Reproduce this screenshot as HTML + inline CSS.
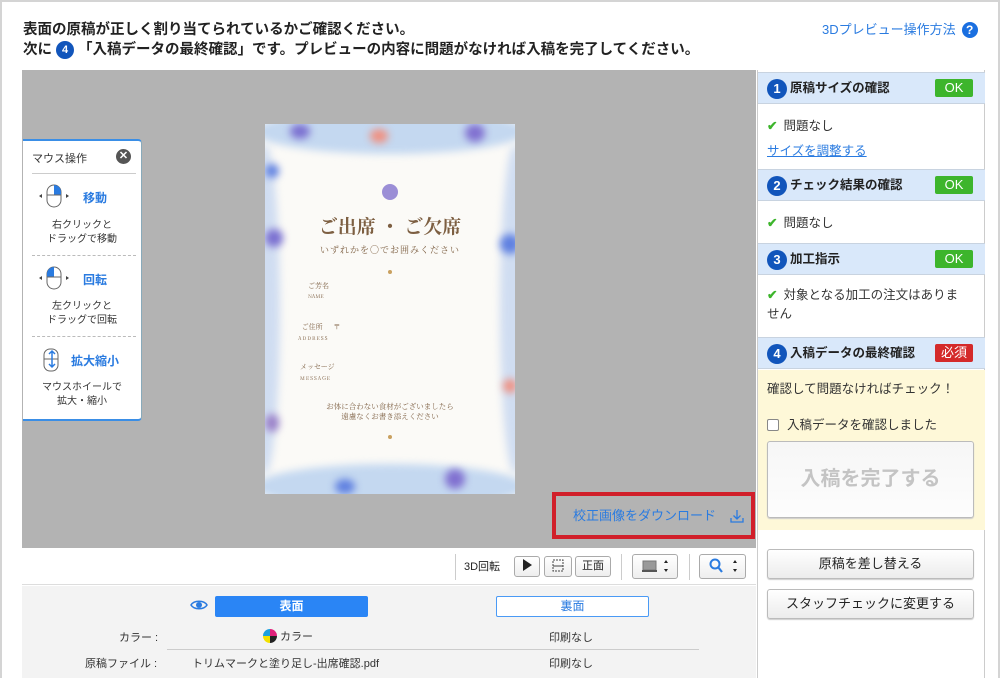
<!DOCTYPE html>
<html><head><meta charset="utf-8"><style>
*{box-sizing:border-box;margin:0;padding:0}
body{width:1002px;height:678px;overflow:hidden;background:#fff;font-family:"Liberation Sans","Noto Sans CJK JP",sans-serif;color:#222;position:relative}
.abs{position:absolute}
.frame{left:0;top:0;width:1000px;height:678px;border:2px solid #d4d4d4;border-bottom:none}
.title{left:23px;top:20px;font-size:14.5px;font-weight:bold;line-height:20px;color:#222}
.num{display:inline-block;width:18px;height:18px;border-radius:50%;background:#1155bb;color:#fff;font-size:11px;text-align:center;line-height:18px;font-weight:bold;vertical-align:1px}
.help{left:822px;top:19px;font-size:13px;color:#2a7be0}
.help span{display:inline-block;width:16px;height:16px;border-radius:50%;background:#1a6fe0;color:#fff;font-size:12px;text-align:center;line-height:16px;font-weight:bold;margin-left:6px}
.viewer{left:22px;top:70px;width:734px;height:478px;background:#b3b3b3}
.card{left:265px;top:124px;width:250px;height:370px;background:#fbfaf7;overflow:hidden}
.blob{position:absolute;border-radius:50%;filter:blur(4px)}
.gold{color:#7d5f42;font-family:"Noto Serif CJK SC","Liberation Serif",serif}
.mouse{left:23px;top:139px;width:119px;height:282px;background:#fff;border:1px solid #8ab;border-top:2px solid #3a8ee6;border-bottom:2px solid #3a8ee6;border-left:none;border-radius:0 4px 4px 0;font-size:10px;color:#333;text-align:center}
.mouse .blue{color:#2a7be0;font-weight:bold;font-size:12px}
.dl{left:552px;top:492px;width:203px;height:47px;border:4px solid #d11f2a;color:#2a7be0;font-size:13px;line-height:39px;padding-left:17px}
.tb{left:22px;top:548px;width:734px;height:37px;background:#fff;border-bottom:1px solid #ddd}
.btn{position:absolute;height:21px;border:1px solid #aaa;border-radius:3px;background:linear-gradient(#fff,#eee);font-size:11px;text-align:center;line-height:19px}
.info{left:22px;top:586px;width:734px;height:92px;background:#f3f3f3;font-size:11px;color:#333}
.rp{left:757px;top:70px;width:228px;height:608px;border-left:1px solid #ccc;border-right:1px solid #ccc;background:#fff}
.hd{position:absolute;left:0;width:227px;height:32px;background:#d9e8fa;border-top:1px solid #c8d3e0;border-bottom:1px solid #c8d3e0;font-size:12.5px;font-weight:bold;line-height:30px;padding-left:9px}
.hd .num{width:20px;height:20px;line-height:20px;font-size:13px;margin-right:3px;vertical-align:-1px}
.ok{position:absolute;right:12px;top:6px;width:38px;height:18px;background:#3db52c;color:#fff;border-radius:2px;text-align:center;line-height:18px;font-size:13px;font-weight:normal}
.tx{position:absolute;left:9px;font-size:12.5px;color:#333}
.ck{color:#3db52c;font-weight:bold;margin-right:6px}
.rb{position:absolute;left:9px;width:207px;height:30px;border:1px solid #bbb;border-radius:3px;background:linear-gradient(#fff,#ececec);font-size:13px;text-align:center;line-height:28px;box-shadow:0 1px 1px #ccc}
</style></head><body>
<div class="abs frame"></div>
<div class="abs title">表面の原稿が正しく割り当てられているかご確認ください。<br>次に <span class="num">4</span> 「入稿データの最終確認」です。プレビューの内容に問題がなければ入稿を完了してください。</div>
<div class="abs help">3Dプレビュー操作方法<span>?</span></div>

<div class="abs viewer"></div>
<div class="abs card">
 <div class="blob" style="left:-10px;top:-15px;width:270px;height:45px;background:#c4d8f0"></div>
 <div class="blob" style="left:-15px;top:20px;width:30px;height:330px;background:#d0ddf1"></div>
 <div class="blob" style="left:235px;top:20px;width:30px;height:330px;background:#d0ddf1"></div>
 <div class="blob" style="left:-10px;top:340px;width:270px;height:45px;background:#c4d8f0"></div>
 <div class="blob" style="left:25px;top:0;width:20px;height:15px;background:#7a6fd0"></div>
 <div class="blob" style="left:105px;top:5px;width:18px;height:14px;background:#f09080"></div>
 <div class="blob" style="left:200px;top:0;width:20px;height:18px;background:#8070d0"></div>
 <div class="blob" style="left:0;top:105px;width:18px;height:18px;background:#7a6fd0"></div>
 <div class="blob" style="left:235px;top:110px;width:20px;height:20px;background:#5f80e0"></div>
 <div class="blob" style="left:70px;top:355px;width:20px;height:15px;background:#5f80e0"></div>
 <div class="blob" style="left:180px;top:345px;width:20px;height:20px;background:#8070d0"></div>
 <div class="blob" style="left:0;top:40px;width:14px;height:14px;background:#5f80e0"></div>
 <div class="blob" style="left:238px;top:255px;width:14px;height:14px;background:#f09080"></div>
 <div class="blob" style="left:0;top:290px;width:14px;height:18px;background:#9a80c8"></div>
 <div style="position:absolute;left:117px;top:60px;width:16px;height:16px;border-radius:50%;background:#9b8ed6"></div>
 <div class="abs gold" style="left:0;width:250px;top:88px;text-align:center;font-size:19px;font-weight:bold">ご出席 ・ ご欠席</div>
 <div class="abs gold" style="left:0;width:250px;top:119px;text-align:center;font-size:9px;letter-spacing:1px">いずれかを〇でお囲みください</div>
 <div class="abs" style="left:123px;top:146px;width:4px;height:4px;border-radius:50%;background:#c9a060"></div>
 <div class="abs gold" style="left:43px;top:157px;font-size:7px;line-height:10px">ご芳名<br><span style="font-size:5px">NAME</span></div>
 <div class="abs gold" style="left:33px;top:198px;font-size:7px;line-height:11px">&nbsp;&nbsp;ご住所 &nbsp;&nbsp;&nbsp;&nbsp;&nbsp;〒<br><span style="font-size:5px;letter-spacing:1px">ADDRESS</span></div>
 <div class="abs gold" style="left:35px;top:238px;font-size:7px;line-height:11px">メッセージ<br><span style="font-size:5px;letter-spacing:1px">MESSAGE</span></div>
 <div class="abs gold" style="left:0;width:250px;top:278px;text-align:center;font-size:7.5px;line-height:10px">お体に合わない食材がございましたら<br>遠慮なくお書き添えください</div>
 <div class="abs" style="left:123px;top:311px;width:4px;height:4px;border-radius:50%;background:#c9a060"></div>
</div>

<div class="abs mouse">
 <div style="text-align:left;padding:9px 0 0 9px;font-size:11px">マウス操作</div>
 <div class="abs" style="right:10px;top:8px;width:15px;height:15px;border-radius:50%;background:#555;color:#fff;font-size:11px;line-height:15px;font-weight:bold">✕</div>
 <div class="abs" style="left:9px;right:5px;top:32px;border-top:1px solid #ccc"></div>
 <svg class="abs" style="left:15px;top:42px" width="32" height="26"><rect x="9" y="2" width="14" height="22" rx="7" fill="#fff" stroke="#666"/><path d="M16 2a7 7 0 0 1 7 7v3h-7z" fill="#2a7be0"/><line x1="9" y1="12" x2="23" y2="12" stroke="#666"/><path d="M1 13l3-2v4zM31 13l-3-2v4z" fill="#444"/></svg>
 <div class="abs blue" style="left:60px;top:48px">移動</div>
 <div class="abs" style="left:0;width:118px;top:78px;line-height:14px">右クリックと<br>ドラッグで移動</div>
 <div class="abs" style="left:9px;right:5px;top:114px;border-top:1px dashed #bbb"></div>
 <svg class="abs" style="left:15px;top:124px" width="32" height="26"><rect x="9" y="2" width="14" height="22" rx="7" fill="#fff" stroke="#666"/><path d="M16 2a7 7 0 0 0 -7 7v3h7z" fill="#2a7be0"/><line x1="9" y1="12" x2="23" y2="12" stroke="#666"/><path d="M1 13l3-2v4zM31 13l-3-2v4z" fill="#444"/></svg>
 <div class="abs blue" style="left:60px;top:130px">回転</div>
 <div class="abs" style="left:0;width:118px;top:159px;line-height:14px">左クリックと<br>ドラッグで回転</div>
 <div class="abs" style="left:9px;right:5px;top:195px;border-top:1px dashed #bbb"></div>
 <svg class="abs" style="left:18px;top:206px" width="22" height="26"><rect x="3" y="2" width="14" height="22" rx="6" fill="#fff" stroke="#666"/><line x1="3" y1="12" x2="17" y2="12" stroke="#666"/><path d="M11 4v16M8 7l3-3 3 3M8 17l3 3 3-3" stroke="#2a7be0" fill="none" stroke-width="1.5"/></svg>
 <div class="abs blue" style="left:48px;top:211px">拡大縮小</div>
 <div class="abs" style="left:0;width:118px;top:240px;line-height:14px">マウスホイールで<br>拡大・縮小</div>
</div>

<div class="abs dl">校正画像をダウンロード <svg style="vertical-align:-3px;margin-left:10px" width="14" height="14"><path d="M7 1v9M3.5 6.5L7 10l3.5-3.5M1 9v4h12V9" stroke="#2a7be0" fill="none" stroke-width="1.3"/></svg></div>

<div class="abs tb">
 <div class="abs" style="left:433px;top:6px;height:26px;border-left:1px solid #ccc"></div>
 <div class="abs" style="left:442px;top:10px;font-size:11px">3D回転</div>
 <div class="btn" style="left:492px;top:8px;width:26px"><svg width="10" height="12" style="vertical-align:-2px"><path d="M1 0L10 6L1 12z" fill="#222"/></svg></div>
 <div class="btn" style="left:522px;top:8px;width:28px"><svg width="16" height="16" style="vertical-align:-3px"><rect x="3" y="3" width="10" height="11" fill="none" stroke="#444" stroke-dasharray="2 1"/><line x1="3" y1="9" x2="13" y2="9" stroke="#444"/></svg></div>
 <div class="btn" style="left:553px;top:8px;width:36px">正面</div>
 <div class="abs" style="left:599px;top:6px;height:26px;border-left:1px solid #ccc"></div>
 <div class="btn" style="left:610px;top:6px;width:46px;height:25px"><svg width="40" height="22"><rect x="8" y="6" width="13" height="9" fill="#999" stroke="#777"/><rect x="7" y="15" width="15" height="2" fill="#555"/><path d="M29 8l2-3 2 3zM29 14l2 3 2-3z" fill="#222"/></svg></div>
 <div class="abs" style="left:667px;top:6px;height:26px;border-left:1px solid #ccc"></div>
 <div class="btn" style="left:677px;top:6px;width:47px;height:25px"><svg width="40" height="22"><circle cx="12" cy="9" r="4.5" fill="none" stroke="#2a7be0" stroke-width="2"/><path d="M15 12l4 5" stroke="#2a7be0" stroke-width="2.2"/><path d="M30 8l2-3 2 3zM30 14l2 3 2-3z" fill="#222"/></svg></div>
</div>

<div class="abs info">
 <svg class="abs" style="left:168px;top:12px" width="18" height="14"><path d="M1 7C4 2 14 2 17 7C14 12 4 12 1 7z" fill="none" stroke="#2a7be0" stroke-width="1.5"/><circle cx="9" cy="7" r="3" fill="#2a7be0"/></svg>
 <div class="abs" style="left:193px;top:10px;width:153px;height:21px;background:#2a85f5;border-radius:2px;color:#fff;font-weight:bold;font-size:12px;text-align:center;line-height:21px">表面</div>
 <div class="abs" style="left:474px;top:10px;width:153px;height:21px;background:#fff;border:1px solid #4a9af5;border-radius:2px;color:#2a7be0;font-size:12px;text-align:center;line-height:19px">裏面</div>
 <div class="abs" style="left:97px;top:43px">カラー :</div>
 <div class="abs" style="left:241px;top:42px"><span style="display:inline-block;width:14px;height:14px;border-radius:50%;background:conic-gradient(#e0207a 0 25%,#222 0 50%,#f2e000 0 75%,#1aa0e0 0);vertical-align:-3px"></span> カラー</div>
 <div class="abs" style="left:527px;top:43px">印刷なし</div>
 <div class="abs" style="left:145px;top:63px;width:532px;border-top:1px solid #ccc"></div>
 <div class="abs" style="left:63px;top:69px">原稿ファイル :</div>
 <div class="abs" style="left:170px;top:69px">トリムマークと塗り足し-出席確認.pdf</div>
 <div class="abs" style="left:527px;top:69px">印刷なし</div>
</div>

<div class="abs rp">
 <div class="hd" style="top:2px"><span class="num">1</span>原稿サイズの確認<span class="ok">OK</span></div>
 <div class="tx" style="top:45px"><span class="ck">✔</span>問題なし</div>
 <div class="tx" style="top:70px;color:#2a7be0;text-decoration:underline">サイズを調整する</div>
 <div class="hd" style="top:99px"><span class="num">2</span>チェック結果の確認<span class="ok">OK</span></div>
 <div class="tx" style="top:142px"><span class="ck">✔</span>問題なし</div>
 <div class="hd" style="top:173px"><span class="num">3</span>加工指示<span class="ok">OK</span></div>
 <div class="tx" style="top:216px;line-height:19px"><span class="ck">✔</span>対象となる加工の注文はありま<br>せん</div>
 <div class="hd" style="top:267px"><span class="num">4</span>入稿データの最終確認<span class="ok" style="background:#d42a2a">必須</span></div>
 <div class="abs" style="left:0;top:300px;width:227px;height:160px;background:#fef8d8"></div>
 <div class="tx" style="top:308px">確認して問題なければチェック！</div>
 <div class="tx" style="top:344px"><span style="display:inline-block;width:12px;height:12px;border:1px solid #888;border-radius:2px;background:#fff;vertical-align:-2px;margin-right:8px"></span>入稿データを確認しました</div>
 <div class="rb" style="top:371px;height:77px;line-height:75px;font-size:20px;font-weight:bold;color:#c4c4c4;background:linear-gradient(#f6f6f6,#fdfdfd)">入稿を完了する</div>
 <div class="rb" style="top:479px">原稿を差し替える</div>
 <div class="rb" style="top:519px">スタッフチェックに変更する</div>
</div>
</body></html>
